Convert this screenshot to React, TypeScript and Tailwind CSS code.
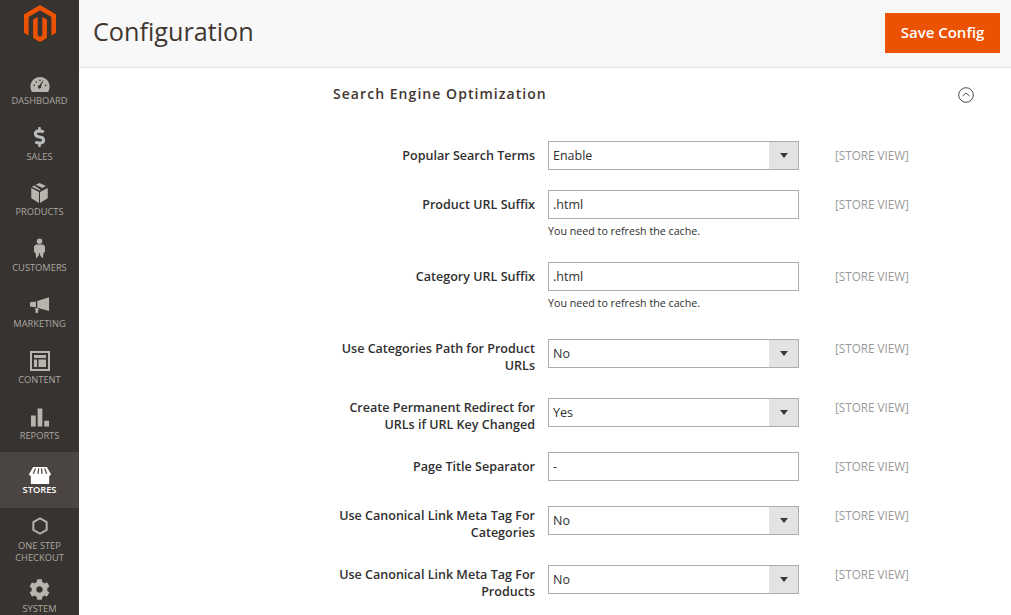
import type { ReactNode } from "react";
import { FaCog, FaDollarSign } from "react-icons/fa";

const icons: Record<string, ReactNode> = {
  dashboard: (
    <svg viewBox="0 0 24 18" className="w-[20px] h-[15px] mt-[7px]">
      <path fill="currentColor" d="M12 0C5.400 0 .5 5.200.5 11.500c0 2.300.6 4.400 1.700 6.500h19.600c1.100-2.100 1.700-4.200 1.700-6.500C23.500 5.200 18.600 0 12 0z" />
      <path fill="#373330" d="M13.300 11.200 16.600 3l-5.300 7a2 2 0 1 0 2 1.200z" />
      <circle cx="5" cy="10" r="1" fill="#373330" />
      <circle cx="7.500" cy="6" r="1" fill="#373330" />
      <circle cx="12" cy="4" r="1" fill="#373330" />
      <circle cx="19" cy="10" r="1" fill="#373330" />
    </svg>
  ),
  sales: <FaDollarSign className="w-[13px] h-[20px] text-[#b9bdbd]" />,
  products: (
    <svg viewBox="0 0 20 20" className="w-[17px] h-[20px]" preserveAspectRatio="none">
      <path fill="currentColor" d="M10 0 5.600 1.800l7.600 3.100 4.500-1.800zM4 2.500.9 3.800 10 7.500l1.500-.6z" />
      <path fill="currentColor" d="M.3 5v10.300L9.400 20V9zM19.700 5l-9.100 4v11l9.100-4.700z" />
    </svg>
  ),
  customers: (
    <svg viewBox="0 0 12 22" className="w-[11px] h-[21px] -mt-[2px]">
      <circle cx="6" cy="3" r="3" fill="currentColor" />
      <path fill="currentColor" d="M2 6.700h8l2 2v6l-1.500.8L9.500 22 7 19l-1-4-1 4-2.500 3-1-6.500L0 14.700v-6z" />
    </svg>
  ),
  marketing: (
    <svg viewBox="0 0 22 18" className="w-[20px] h-[17px]">
      <path fill="currentColor" d="M21 0v15L8 11.500V4z" />
      <path fill="currentColor" d="M0 5.500 6.500 4.500v6.500L0 10z" />
      <path fill="currentColor" d="m6 11.500 3.500 1-1 5L6 17z" />
    </svg>
  ),
  content: (
    <svg viewBox="0 0 20 20" className="w-[20px] h-[20px]">
      <path fill="currentColor" fillRule="evenodd" d="M0 0h20v20H0zm2 2v16h16V2z" />
      <path fill="currentColor" d="M4 4h12v3H4zM4 8.500h3V16H4zM8.500 8.500H16V16H8.500z" />
    </svg>
  ),
  reports: (
    <svg viewBox="0 0 19 19" className="w-[18px] h-[19px]">
      <path fill="currentColor" d="M0 7.500h5V19H0zM7 0h5v19H7zM14 13h5v6h-5z" />
    </svg>
  ),
  stores: (
    <svg viewBox="0 0 24 20" className="w-[22px] h-[17px]" preserveAspectRatio="none">
      <path fill="#fff" d="M2 9h20v11H2z" />
      <path fill="#fff" d="M4.500 0h15L24 8.500c0 1.400-1.700 2.200-3 1.500-.6.400-1.500.6-2.200.5-.7 0-1.300-.2-1.900-.5-.7.400-1.500.5-2.400.5s-1.700-.1-2.500-.5c-.8.400-1.600.5-2.500.5s-1.700-.1-2.400-.5c-.6.300-1.200.5-1.900.5S3.600 10.400 3 10c-1.300.7-3 0-3-1.500z" />
      <path fill="#4a4542" d="M6.500 1.500h1.200L5.500 8H4zM10 1.500h1.200L10.500 8H9zM13 1.500h1.200L15 8h-1.500zM16.500 1.500h1.200L20 8h-1.500z" />
    </svg>
  ),
  checkout: (
    <svg viewBox="0 0 18 20" className="w-[16px] h-[18px]">
      <path fill="none" stroke="currentColor" strokeWidth="2.200" d="M9 1.300 16.500 5.600v8.800L9 18.700 1.500 14.400V5.600z" />
    </svg>
  ),
  system: <FaCog className="w-[21px] h-[21px]" />,
};

const navItems = [
  { key: "dashboard", label: "DASHBOARD", pad: "pt-[10px]", gap: "mt-[3px]" },
  { key: "sales", label: "SALES", pad: "pt-[10px]", gap: "mt-[3px]" },
  { key: "products", label: "PRODUCTS", pad: "pt-[10px]", gap: "mt-[2px]" },
  { key: "customers", label: "CUSTOMERS", pad: "pt-[10px]", gap: "mt-[2px]" },
  { key: "marketing", label: "MARKETING", pad: "pt-[10px]", gap: "mt-[2px]" },
  { key: "content", label: "CONTENT", pad: "pt-[10px]", gap: "mt-[2px]" },
  { key: "reports", label: "REPORTS", pad: "pt-[10px]", gap: "mt-[2px]" },
  { key: "stores", label: "STORES", pad: "pt-[12px]", gap: "-mt-[2px]", active: true },
  { key: "checkout", label: "ONE STEP CHECKOUT", pad: "pt-[8px]", gap: "mt-[4px]" },
  { key: "system", label: "SYSTEM", pad: "pt-[14px]", gap: "mt-[3px]" },
];

type Row = {
  label: string;
  value: string;
  height: string;
  select?: boolean;
  note?: boolean;
  twoLine?: boolean;
};

const rows: Row[] = [
  { label: "Popular Search Terms", value: "Enable", select: true, height: "h-[49px]" },
  { label: "Product URL Suffix", value: ".html", note: true, height: "h-[72px]" },
  { label: "Category URL Suffix", value: ".html", note: true, height: "h-[77px]" },
  { label: "Use Categories Path for Product URLs", value: "No", select: true, twoLine: true, height: "h-[59px]" },
  { label: "Create Permanent Redirect for URLs if URL Key Changed", value: "Yes", select: true, twoLine: true, height: "h-[54px]" },
  { label: "Page Title Separator", value: "-", height: "h-[54px]" },
  { label: "Use Canonical Link Meta Tag For Categories", value: "No", select: true, twoLine: true, height: "h-[59px]" },
  { label: "Use Canonical Link Meta Tag For Products", value: "No", select: true, twoLine: true, height: "h-[50px]" },
];

function Sidebar() {
  return (
    <aside className="w-[79px] h-[615px] shrink-0 bg-[#373330] overflow-hidden flex flex-col">
      <div className="h-[60px] shrink-0 flex justify-center pt-[5px]">
        <svg viewBox="0 0 32 37" className="w-[32px] h-[37px]">
          <path fill="#eb5202" d="M16 0 0 9.200v18.500l4.600 2.700V11.900L16 5.300l11.400 6.600v18.500l4.600-2.700V9.200z" />
          <path fill="#eb5202" d="M13.700 11.900 9.100 14.500v18.500L16 37l6.900-4V14.500l-4.600-2.600V30.400L16 31.700l-2.300-1.300z" />
        </svg>
      </div>
      {navItems.map((item) => (
        <div
          key={item.key}
          className={`h-[56px] shrink-0 flex flex-col items-center ${item.pad} ${
            item.active ? "bg-[#4a4542]" : ""
          }`}
        >
          <div className="h-[22px] flex items-center justify-center text-[#b8b4ae]">{icons[item.key]}</div>
          <div
            className={`text-center text-[9.300px] leading-[12px] ${item.gap} ${
              item.active ? "w-full text-white font-semibold" : "w-[62px] text-[#aaa6a0]"
            }`}
          >
            {item.label}
          </div>
        </div>
      ))}
    </aside>
  );
}

function Field({ row }: { row: Row }) {
  return (
    <div className={`flex items-start ${row.height}`}>
      <div
        className={`w-[202px] text-right text-[12.550px] leading-[17px] font-semibold text-[#303030] ${
          row.twoLine ? "pt-[1px]" : "pt-[6px]"
        }`}
      >
        {row.label}
      </div>
      <div className="w-[251px] ml-[13px]">
        <div className="h-[29px] border border-[#adadad] bg-white flex items-stretch">
          <div className="flex-1 pl-[4px] text-[12.500px] leading-[27px] text-[#303030]">{row.value}</div>
          {row.select && (
            <div className="w-[29px] bg-[#e3e3e3] flex items-center justify-center">
              <div className="w-0 h-0 border-l-[4px] border-r-[4px] border-t-[5px] border-l-transparent border-r-transparent border-t-[#41362f]" />
            </div>
          )}
        </div>
        {row.note && (
          <div className="text-[10.700px] leading-[14px] text-[#303030] mt-[5px]">You need to refresh the cache.</div>
        )}
      </div>
      <div
        className={`ml-[36px] text-[11.700px] leading-[18px] text-[#999999] whitespace-nowrap ${
          row.twoLine ? "" : "pt-[5px]"
        }`}
      >
        [STORE VIEW]
      </div>
    </div>
  );
}

export default function App() {
  return (
    <div className="flex w-[1011px] h-[615px] overflow-hidden bg-white font-['Open_Sans',sans-serif]">
      <Sidebar />
      <main className="flex-1 min-w-0">
        <header className="h-[68px] bg-[#f8f8f8] border-b border-[#e3e3e3] flex items-start justify-between pl-[14px] pr-[11px]">
          <h1 className="text-[25.200px] leading-[36px] mt-[13px] text-[#41362f]">Configuration</h1>
          <button className="mt-[13px] w-[115px] h-[40px] bg-[#eb5202] text-white text-[15px] leading-[36px] pb-[2px] font-semibold">
            Save Config
          </button>
        </header>
        <div className="pl-[254px] pr-[37px] pt-[16px] flex items-start justify-between h-[73px]">
          <h2 className="text-[14px] leading-[20px] font-semibold tracking-[0.075em] text-[#41362f]">
            Search Engine Optimization
          </h2>
          <svg viewBox="0 0 16 16" className="w-[16px] h-[16px] mt-[3px] text-[#41362f]">
            <circle cx="8" cy="8" r="7.300" fill="none" stroke="currentColor" strokeWidth="0.900" />
            <path d="M4.500 9 8 6l3.500 3" fill="none" stroke="currentColor" strokeWidth="0.900" />
          </svg>
        </div>
        <div className="pl-[254px]">
          {rows.map((row) => (
            <Field key={row.label} row={row} />
          ))}
        </div>
      </main>
    </div>
  );
}
